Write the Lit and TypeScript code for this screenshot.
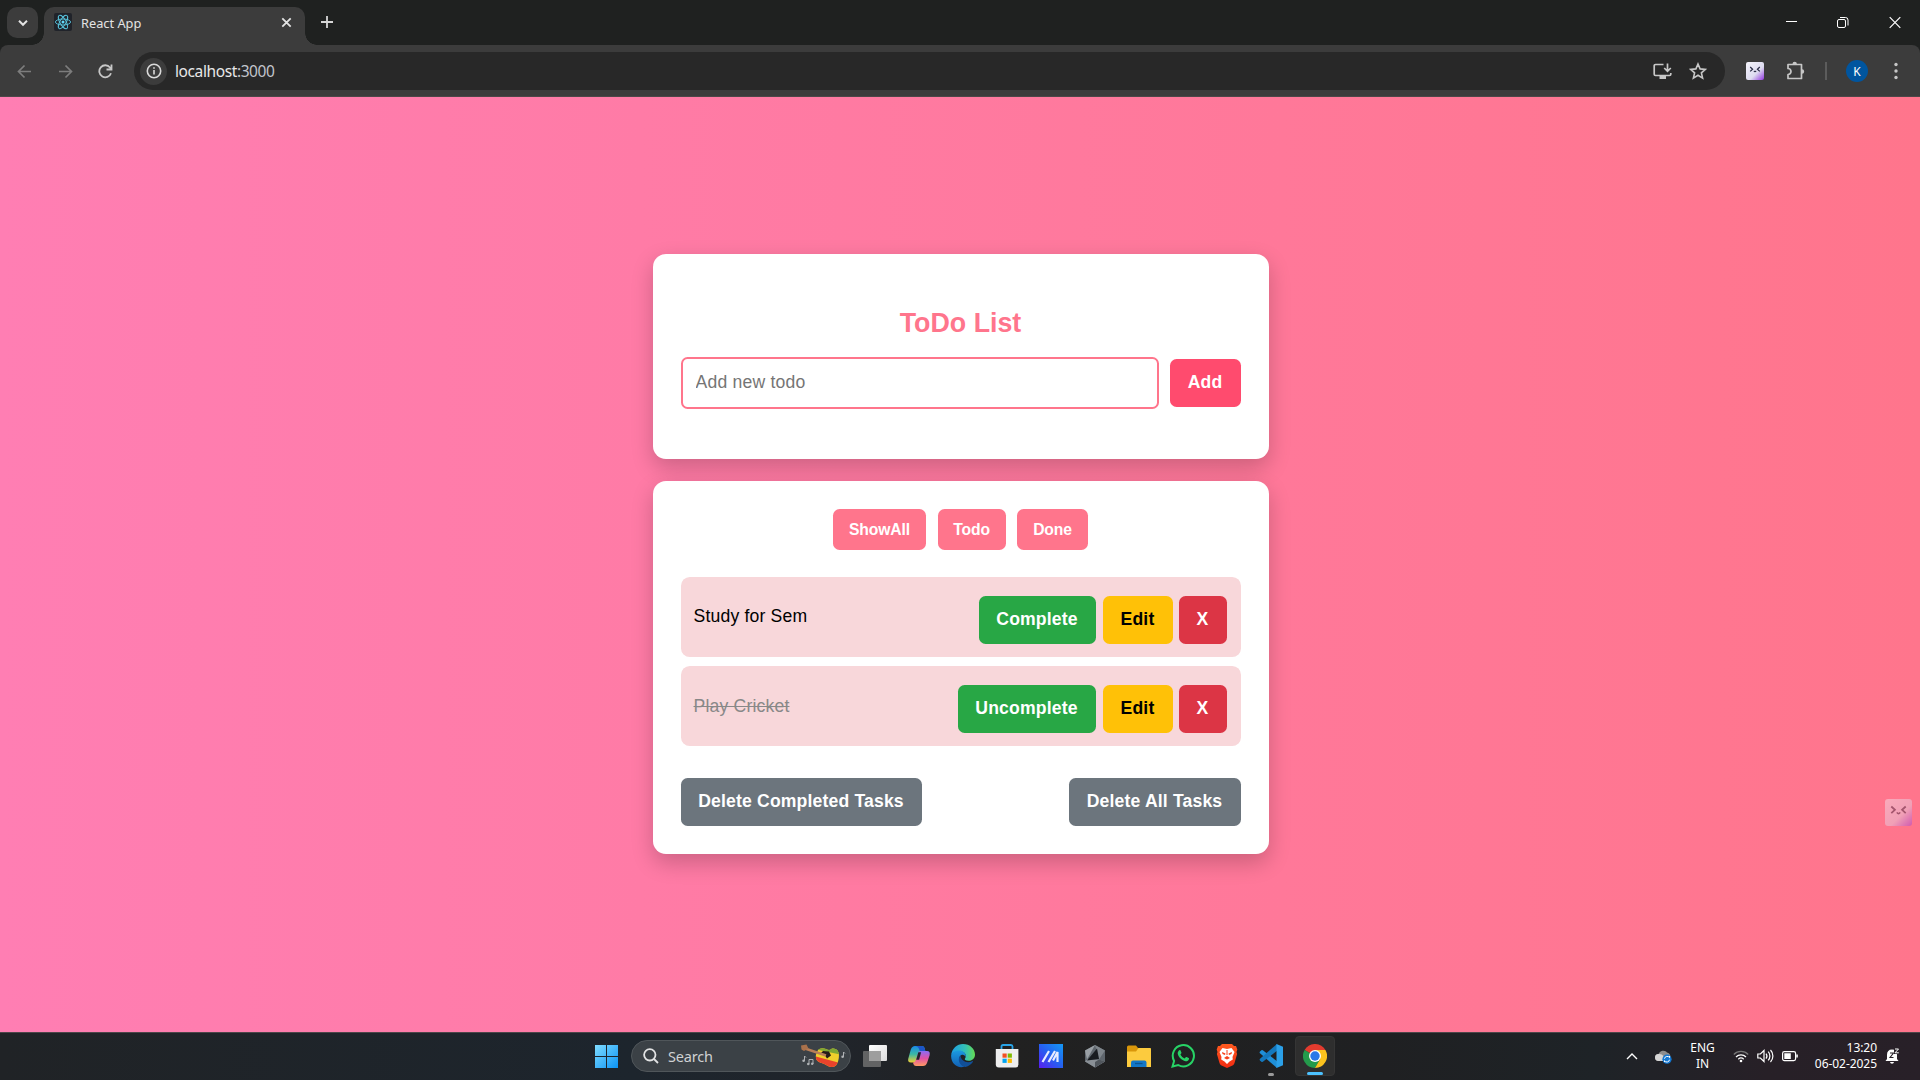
import { LitElement, html, css } from "lit";
import { customElement } from "lit/decorators.js";

const reactLogo = html`<svg width="18" height="18" viewBox="0 0 18 18"><rect width="18" height="18" rx="2" fill="#20232a"/><g fill="none" stroke="#58c4dc" stroke-width=".9"><ellipse cx="9" cy="9" rx="7.6" ry="3"/><ellipse cx="9" cy="9" rx="7.6" ry="3" transform="rotate(60 9 9)"/><ellipse cx="9" cy="9" rx="7.6" ry="3" transform="rotate(120 9 9)"/></g><circle cx="9" cy="9" r="1.5" fill="#61dafb"/></svg>`;

const face = html`<svg width="18" height="18" viewBox="0 0 18 18"><defs><linearGradient id="f" x1="0" y1="0" x2="1" y2="1"><stop offset="0" stop-color="#f4f3fa"/><stop offset=".6" stop-color="#dedcf0"/><stop offset="1" stop-color="#9236e0"/></linearGradient></defs><rect width="18" height="18" rx="2" fill="url(#f)"/><path d="M4.200 5l2.400 2.200-2.400 2.200M13.800 5l-2.400 2.200 2.400 2.200" fill="none" stroke="#292b45" stroke-width="1.200"/><path d="M7.900 8.900q1.100 1.700 2.200 0" fill="none" stroke="#292b45" stroke-width="1.100"/></svg>`;

const taskIcons = [
  // task view
  html`<svg width="26" height="24" viewBox="0 0 26 24"><defs><linearGradient id="a" x2="1" y2="1"><stop stop-color="#fff"/><stop offset="1" stop-color="#dcdcdc"/></linearGradient></defs><rect x="7" y="1" width="18" height="16" rx="1" fill="url(#a)"/><rect x="1" y="7" width="18" height="16" rx="1" fill="#6f6f6f" fill-opacity=".85"/><path d="M7 7h12v10H7z" fill="#9e9e9e"/></svg>`,
  // copilot
  html`<svg width="24" height="24" viewBox="0 0 24 24"><defs><linearGradient id="b" x1="0" y1="0" x2="0" y2="1"><stop stop-color="#1a8be8"/><stop offset=".5" stop-color="#3ab9a5"/><stop offset="1" stop-color="#f2cf31"/></linearGradient><linearGradient id="c" x1="0" y1="0" x2="0" y2="1"><stop stop-color="#8a6cf5"/><stop offset=".5" stop-color="#e052a4"/><stop offset="1" stop-color="#ff9a62"/></linearGradient></defs><path d="M8 2h7q2 0 2.600 2l.7 3h-3q-2 0-2.600 2l-2 7q-.7 2.500-3 2.500H4Q.3 18.500 1.300 14.600L3.800 5.500Q5 2 8 2z" fill="url(#b)"/><path d="M8 2h7q2 0 2.600 2l.7 3h-3q-1.300 0-2 .9L11.600 4Q10.700 2 8 2z" fill="#1c55c8"/><path d="M16 22H9q-2 0-2.600-2l-.4-1.600q2 .2 3-2.400l2-7q.6-2 2.600-2H20q3.500 0 2.600 4.200L20.200 18.500Q19 22 16 22z" fill="url(#c)"/><path d="M11.300 8.200h2.800l-2 7.500H9.200z" fill="#20242a"/></svg>`,
  // edge
  html`<svg width="24" height="24" viewBox="0 0 24 24"><defs><linearGradient id="d" x1="0" y1=".3" x2="1" y2=".3"><stop stop-color="#1c9ee6"/><stop offset=".6" stop-color="#35c1b4"/><stop offset="1" stop-color="#65dc52"/></linearGradient><linearGradient id="e" x2="0" y2="1"><stop stop-color="#1b9be0"/><stop offset="1" stop-color="#1260b4"/></linearGradient></defs><path d="M.2 11C1 4.500 6 0 12 0c7 0 12 5 12 10.500 0 4-3 6.300-6.500 6.300-3 0-4.300-1.300-3.500-2.300 2.400-3.500-.5-7-4.500-7C5 7.500 1.200 8.500.2 11z" fill="url(#d)"/><path d="M.2 11C1.300 7.500 5.500 6 9 6.500c3.800.5 6.400 3.500 5.700 6.500-.5-1.500-2-2.600-3.700-2.300-4.200 1-3.500 9 2.500 12C6 25-.6 19 .2 11z" fill="url(#e)"/><path d="M9.500 11.500c-3.500 3-1.500 10.500 5 11.600 3-.8 6-2.700 7.500-5.300.3-.7-.2-.9-.8-.6-5.500 2.500-11.200-.2-11.700-5.700z" fill="#114f98"/></svg>`,
  // store
  html`<svg width="24" height="24" viewBox="0 0 24 24"><path d="M6.500 5V2.600Q6.500 1 8 1h8q1.500 0 1.500 1.600V5" fill="none" stroke="#29a4e8" stroke-width="1.800"/><path d="M.8 5h22.600v15.500q0 3-3 3H3.800q-3 0-3-3z" fill="#eeeeee"/><path d="M7.500 9.500h4.200v4.200H7.500z" fill="#f25022"/><path d="M12.700 9.500h4.200v4.200h-4.200z" fill="#7fba00"/><path d="M7.500 14.700h4.200v4.200H7.500z" fill="#00a4ef"/><path d="M12.700 14.700h4.200v4.200h-4.200z" fill="#ffb900"/></svg>`,
  // slanted lines tile
  html`<svg width="24" height="24" viewBox="0 0 24 24"><defs><linearGradient id="g" x1="1" y1="0" x2="0" y2="1"><stop stop-color="#1499f5"/><stop offset=".5" stop-color="#2560f0"/><stop offset="1" stop-color="#5a1df0"/></linearGradient></defs><path d="M0 0h24v24H0z" fill="url(#g)"/><path d="M3.500 18L10 7M9.500 18L16 7M14 16.500l4.500-8.500v10" fill="none" stroke="#e8ecff" stroke-width="2.200"/></svg>`,
  // hexagon
  html`<svg width="24" height="24" viewBox="0 0 24 24"><path d="M12 1l10 5.500v11L12 23.500 2 17.500v-11z" fill="#5f666d"/><path d="M12 1l10 5.500-6 9z" fill="#7f868c"/><path d="M12 1L2 6.500l2 9z" fill="#9aa0a5"/><path d="M2 17.500L12 23.500l10-6-6-2H4z" fill="#8a9096"/><path d="M12 18v5.500l10-6-6-2z" fill="#50565c"/><path d="M14 4.500L4 16.500l12-1.500z" fill="#191c20"/></svg>`,
  // folder
  html`<svg width="26" height="24" viewBox="0 0 26 24"><path d="M1 3q0-1.500 1.500-1.500h7.500l2 2.500h11q2 0 2 2v6H1z" fill="#d9960a"/><path d="M1 7.500h9L12.500 4H24q1 0 1 1v18H1z" fill="#fccb3e"/><path d="M5 23v-4.500q0-2 2-2h11.500q2 0 2 2V23z" fill="#1277c8"/><path d="M9 19.500h7.500" stroke="#0b5592" stroke-width="1.300"/></svg>`,
  // whatsapp
  html`<svg width="24" height="24" viewBox="0 0 24 24"><path d="M1.500 22.500l1.600-5.600A10.600 10.600 0 1 1 7.200 21z" fill="none" stroke="#27d366" stroke-width="2"/><path d="M8.300 6.300c.4-.4 1-.3 1.200.2l.9 2q.2.500-.2.900l-.8 1c1 1.900 2.400 3.200 4.300 4l1-1.200q.4-.5.900-.2l2 1q.6.300.4.900c-.4 1.800-2.100 2.500-3.500 2.300-4-.8-7.300-4-7.800-7.600-.1-1.400.7-2.600 1.600-3.300z" fill="#27d366"/></svg>`,
  // brave
  html`<svg width="24" height="24" viewBox="0 0 24 24"><defs><linearGradient id="h" x2="0" y2="1"><stop stop-color="#ff5a1f"/><stop offset="1" stop-color="#f02b12"/></linearGradient></defs><path d="M7 0h10l2 2h2l1.300 3.500L21.500 8l.6 2-2.600 9q-.4 1.500-1.500 2.200L12 24l-6-2.800Q4.900 20.500 4.500 19L1.900 10l.6-2-.8-2.500L3 2h2z" fill="url(#h)"/><path d="M7.500 4L12 5l4.500-1 3 4-2 5 .3 2.500-3.300 2L12 20l-2.500-2.500-3.300-2 .3-2.500-2-5z" fill="#fff"/><path d="M7 8l3.500 1.500L10 11l-2.500-1zm10 0l-3.500 1.500.5 1.500 2.500-1zM9 14l3-2 3 2-3 1.500zM11.500 6h1v5h-1z" fill="#f6401a"/></svg>`,
  // vscode
  html`<svg width="24" height="24" viewBox="0 0 24 24"><path d="M1 9.200q-.8-.8 0-1.600l1.400-1.300q.7-.5 1.400 0L18 17.200V24z" fill="#1f8fd8"/><path d="M1 14.800q-.8.800 0 1.600l1.400 1.300q.7.500 1.400 0L18 6.800V0z" fill="#1478bd"/><path d="M17.500 0L24 2.800v18.400L17.500 24z" fill="#2ba0e8"/></svg>`,
  // chrome
  html`<svg width="24" height="24" viewBox="0 0 24 24"><path d="M12 12L1.600 6A12 12 0 0 1 22.400 6z" fill="#e33b2e"/><path d="M12 12l5.200 3L12 24A12 12 0 0 1 1.600 6z" fill="#249a4b"/><path d="M12 6h10.400A12 12 0 0 1 12 24l5.200-9z" fill="#fcc31e"/><circle cx="12" cy="12" r="6" fill="#fff"/><circle cx="12" cy="12" r="4.700" fill="#2a78e8"/></svg>`,
];

@customElement("browser-bar")
class BrowserBar extends LitElement {
  static styles = css`
    :host { display: block; height: 97px; flex: none; font-family: "Noto Sans", sans-serif; background: #1f2120; color: #e3e3e3; }
    * { box-sizing: border-box; }
    svg { display: block; flex: none; }
    .tabs { height: 45px; display: flex; background: #1f2120; }
    .search-tabs { width: 31px; height: 31px; margin: 7px 6px 0 7px; border-radius: 10px; background: #3c3c3c; display: grid; place-items: center; }
    .tab { position: relative; width: 261px; height: 38px; margin-top: 7px; border-radius: 10px 10px 0 0; background: #3c3c3c; display: flex; padding: 6px 13px 0 10px; }
    .tab::before, .tab::after { content: ""; position: absolute; bottom: 0; width: 12px; height: 12px; }
    .tab::before { left: -12px; background: radial-gradient(circle at 0 0, transparent 11.5px, #3c3c3c 12px); }
    .tab::after { right: -12px; background: radial-gradient(circle at 100% 0, transparent 11.5px, #3c3c3c 12px); }
    .tab-title { margin-left: 9px; flex: 1; line-height: 20px; font-size: 12.800px; }
    .tab-close { margin-top: 4px; }
    .plus { margin: 16px 0 0 16px; }
    .window { margin-left: auto; display: flex; gap: 40px; padding: 16px 19px 0 0; }
    .tools { height: 52px; display: flex; align-items: center; padding: 1px 18px 0 17px; border-bottom: 1px solid #4d4748; border-radius: 8px 8px 0 0; background: #3c3c3c; }
    .nav { display: flex; gap: 25.500px; margin-right: 21px; }
    .address { width: 1591px; height: 38px; border-radius: 19px; background: #282828; display: flex; align-items: center; padding: 0 18px 0 6px; }
    .info { width: 27px; height: 27px; border-radius: 50%; background: #3c3c3c; display: grid; place-items: center; margin-right: 8px; }
    .url { flex: 1; font-size: 15.5px; letter-spacing: -0.400px; color: #e8e8e8; }
    .port { color: #c2c5cc; }
    .star { margin-left: 17px; }
    .face { margin-left: 21px; }
    .puzzle { margin-left: 22px; }
    .divider { width: 2px; height: 18px; background: #5c5c5c; margin: 0 19px 0 19px; }
    .avatar { width: 22px; height: 22px; border-radius: 50%; background: #00559f; display: grid; place-items: center; font-size: 12px; color: #fff; }
    .dots { margin-left: 26px; }
  `;
  render() {
    return html`
      <div class="tabs">
        <div class="search-tabs"><svg width="12" height="12" viewBox="0 0 12 12" fill="none" stroke="#e3e3e3" stroke-width="2"><path d="M2 3.800l4 4 4-4"/></svg></div>
        <div class="tab">${reactLogo}<span class="tab-title">React App</span><svg class="tab-close" width="11" height="11" viewBox="0 0 11 11" stroke="#e3e3e3" stroke-width="1.800"><path d="M1.300 1.300l8.400 8.400M9.700 1.300L1.300 9.700"/></svg></div>
        <svg class="plus" width="12" height="12" viewBox="0 0 12 12" stroke="#d6d6d6" stroke-width="1.800"><path d="M6 0v12M0 6h12"/></svg>
        <div class="window">
          <svg width="11" height="13" viewBox="0 0 11 13" stroke="#fff"><path d="M0 5.500h11"/></svg>
          <svg width="12" height="13" viewBox="0 0 12 13" fill="none" stroke="#fff"><rect x=".5" y="3.500" width="8" height="8" rx="1.500"/><path d="M3 1.500h5.500q2.500 0 2.500 2.500v5.500"/></svg>
          <svg width="12" height="13" viewBox="0 0 12 13" stroke="#fff" stroke-width="1.200"><path d="M.7 1.200l10.600 10.600M11.300 1.200L.7 11.800"/></svg>
        </div>
      </div>
      <div class="tools">
        <div class="nav">
          <svg width="15" height="15" viewBox="0 0 15 15" fill="none" stroke="#7d7d7d" stroke-width="1.700"><path d="M14 7.500H2M7.500 1.500l-6 6 6 6"/></svg>
          <svg width="15" height="15" viewBox="0 0 15 15" fill="none" stroke="#7d7d7d" stroke-width="1.700"><path d="M1 7.500h12M7.500 1.500l6 6-6 6"/></svg>
          <svg width="15" height="15" viewBox="0 0 15 15" fill="none" stroke="#c7c7c7" stroke-width="1.800"><path d="M13 9.200A6 6 0 1 1 12 3.500l1.200 1.500M13.500.5v5H8.500"/></svg>
        </div>
        <div class="address">
          <div class="info"><svg width="16" height="16" viewBox="0 0 16 16" fill="none" stroke="#dadada" stroke-width="1.600"><circle cx="8" cy="8" r="6.700"/><path d="M8 7v4.500M8 4.300v1.500"/></svg></div>
          <span class="url">localhost<span class="port">:3000</span></span>
          <svg width="19" height="17" viewBox="0 0 19 17" fill="none" stroke="#c7c7c7" stroke-width="1.700"><path d="M10.500 1.500H2.500Q1.200 1.500 1.200 2.800v8.400q0 1.300 1.300 1.300h14q1.300 0 1.300-1.300V10M14.500.5v7M11.200 5l3.300 3.300L17.800 5"/><path d="M6.500 14.500h6.500" stroke-width="3"/></svg>
          <svg class="star" width="18" height="18" viewBox="0 0 18 18" fill="none" stroke="#c7c7c7" stroke-width="1.600"><path d="M9 2l2.100 4.900 5.200.5-3.900 3.500 1.200 5.200L9 13.300l-4.600 2.800 1.200-5.200-3.900-3.500 5.200-.5z"/></svg>
        </div>
        <div class="face">${face}</div>
        <svg class="puzzle" width="20" height="20" viewBox="0 0 20 20" fill="none" stroke="#c7c7c7" stroke-width="1.700"><path d="M2 3.500H15.500V17.500H2V13.500a3 3 0 0 0 0-6z" stroke-linejoin="round"/><path d="M6.500 3a2.200 2.200 0 0 1 4.400 0zM16 8.300a2.200 2.200 0 0 1 0 4.400z" fill="#c7c7c7" stroke="none"/></svg>
        <div class="divider"></div>
        <div class="avatar">K</div>
        <svg class="dots" width="4" height="18" viewBox="0 0 4 18" fill="#c7c7c7"><circle cx="2" cy="2.500" r="1.700"/><circle cx="2" cy="9" r="1.700"/><circle cx="2" cy="15.500" r="1.700"/></svg>
      </div>`;
  }
}

@customElement("todo-page")
class TodoPage extends LitElement {
  static styles = css`
    :host { position: relative; flex: 1; display: flex; flex-direction: column; align-items: center; padding: 157px 0 0 1px; box-sizing: border-box; gap: 22px; background: linear-gradient(to right, #ff7eb3, #ff758c); font-family: "Liberation Sans", Arial, sans-serif; font-size: 17.6px; }
    * { box-sizing: border-box; }
    .card { width: 616px; border-radius: 13px; background: #fff; padding: 28px; box-shadow: 0 8.800px 22px rgba(0, 0, 0, 0.2); }
    .entry { height: 205px; padding-top: 54px; }
    h2 { margin: 0 0 19px; font-size: 26.800px; line-height: 30px; text-align: center; color: #ff758c; }
    .form { display: flex; align-items: center; justify-content: space-between; }
    input { width: 478px; height: 52px; border: 2px solid #ff758c; border-radius: 6.600px; padding: 0 13px 2px; font: inherit; letter-spacing: 0.200px; outline: none; }
    input::placeholder { color: #757575; }
    button { height: 48px; border: 0; border-radius: 6.600px; padding: 0 0 2px; font: bold 17.6px "Liberation Sans", Arial, sans-serif; letter-spacing: 0.160px; color: #fff; white-space: nowrap; }
    .add { width: 71px; background: #ff4b6e; }
    .list { height: 373px; }
    .filters { display: flex; justify-content: center; gap: 11.500px; margin-bottom: 27px; }
    .filters button { height: 41px; background: #ff758c; font-size: 15.700px; letter-spacing: -0.120px; padding: 0; width: 71px; }
    .filters .all { width: 93px; }
    .filters .todo { width: 68px; }
    .task { height: 80px; margin-bottom: 9px; border-radius: 8.800px; background: #f8d7da; display: flex; align-items: flex-start; padding: 19px 14px 0 13px; gap: 6px; }
    .task span { flex: 1; padding-top: 10px; line-height: 20px; color: #000; letter-spacing: 0.180px; }
    .task span.done { color: #888; text-decoration: line-through; padding-top: 11px; }
    .complete { background: #28a745; width: 117px; margin-right: 1px; }
    .complete.undo { width: 138px; }
    .task .edit { width: 70px; background: #ffc107; color: #000; }
    .task .remove { width: 48px; background: #dc3545; }
    .foot { display: flex; justify-content: space-between; margin-top: 32px; }
    .foot button { background: #6c757d; width: 172px; }
    .foot .wide { width: 241px; }
    .helper { position: absolute; right: 8px; top: 702px; width: 27px; height: 27px; opacity: .42; }
    .helper svg { width: 27px; height: 27px; }
  `;
  tasks = [
    { text: "Study for Sem", done: false },
    { text: "Play Cricket", done: true },
  ];
  render() {
    return html`
      <div class="card entry">
        <h2>ToDo List</h2>
        <div class="form"><input placeholder="Add new todo" /><button class="add">Add</button></div>
      </div>
      <div class="card list">
        <div class="filters"><button class="all">ShowAll</button><button class="todo">Todo</button><button>Done</button></div>
        ${this.tasks.map((t) => html`<div class="task">
          <span class=${t.done ? "done" : ""}>${t.text}</span>
          <button class="complete ${t.done ? "undo" : ""}">${t.done ? "Uncomplete" : "Complete"}</button>
          <button class="edit">Edit</button><button class="remove">X</button>
        </div>`)}
        <div class="foot"><button class="wide">Delete Completed Tasks</button><button>Delete All Tasks</button></div>
      </div>
      <div class="helper">${face}</div>`;
  }
}

@customElement("task-bar")
class TaskBar extends LitElement {
  static styles = css`
    :host { display: flex; height: 48px; flex: none; box-sizing: border-box; border-top: 1px solid #4d4649; padding-bottom: 1px; background: linear-gradient(90deg, #202326 0, #1d252d 33%, #20242a 44%, #212121 52%, #1f2022 72%, #1e2327 83%, #272027 92%, #282028 100%); color: #fff; font-family: "Noto Sans", sans-serif; font-size: 12px; }
    * { box-sizing: border-box; }
    svg { display: block; flex: none; }
    .apps { display: flex; align-items: center; padding-left: 595px; }
    .search { width: 220px; height: 32px; margin: 0 2px 0 13px; border-radius: 16px; background: #3b4146; border: 1px solid #50565a; display: flex; align-items: center; padding: 0 4px 0 11px; font-size: 14.500px; letter-spacing: -0.200px; color: #cfd1d3; }
    .search span { margin-left: 9px; flex: 1; }
    .app { position: relative; width: 40px; height: 40px; margin: 0 2px; border-radius: 4px; display: grid; place-items: center; }
    .app.active { background: #2e2e2e; border: 1px solid #353535; }
    .app::after { content: ""; position: absolute; bottom: 0; height: 3px; border-radius: 2px; }
    .app.running::after { width: 6px; background: #9a9a9a; }
    .app.active::after { width: 16px; background: #4cc2ff; }
    .tray { margin-left: auto; display: flex; align-items: center; padding-right: 20px; }
    .cloud { margin-left: 17px; }
    .lang { text-align: center; line-height: 16px; margin: 0 18px 0 18px; }
    .status { display: flex; gap: 8px; align-items: center; }
    .clock { text-align: right; line-height: 16px; margin: 0 8px 0 17px; letter-spacing: -0.050px; }
  `;
  render() {
    return html`
      <div class="apps">
        <svg width="23" height="23" viewBox="0 0 23 23"><defs><linearGradient id="w" x2="1" y2="1"><stop stop-color="#7fdcff"/><stop offset="1" stop-color="#0b93f5"/></linearGradient></defs><path d="M0 0h11v11H0zM12 0h11v11H12zM0 12h11v11H0zM12 12h11v11H12z" fill="url(#w)"/></svg>
        <div class="search">
          <svg width="16" height="16" viewBox="0 0 16 16" fill="none" stroke="#e2e3e4" stroke-width="1.800"><circle cx="6.800" cy="6.800" r="5.700"/><path d="M11 11l4 4"/></svg>
          <span>Search</span>
          <svg width="46" height="24" viewBox="0 0 46 24">
            <defs><clipPath id="body"><path d="M18 6q3-3 8-1 4 2 6-.5 6-1 7 6 0 7-3 11-4 3-9 0-3-2-7-3-5-2-4-8z"/></clipPath></defs>
            <g clip-path="url(#body)"><path d="M10 0h32v24H10z" fill="#f0cf2c"/><path d="M14 0h28v11L14 5z" fill="#7fa733"/><path d="M14 12l26 7v5H14z" fill="#e8432c"/></g>
            <path d="M20 10l3-3 6 .500 2 4-4 3-2-3z" fill="#241c18"/>
            <path d="M5 4.500l21 7" stroke="#b87f58" stroke-width="2.400"/>
            <path d="M1 1.500L6.500.500l2 4L4 7 1.500 5.500z" fill="#a9714b"/>
            <g fill="none" stroke="#aeb1b4"><path d="M4.500 17v-5l1.500 1.500M9 20.500v-5h4v4.500M43.500 13V8l1.500 1.500"/></g><g fill="#aeb1b4"><circle cx="3.600" cy="16.700" r="1.300"/><circle cx="8.200" cy="20" r="1.200"/><circle cx="12.200" cy="19.700" r="1.200"/><circle cx="42.600" cy="12.700" r="1.300"/></g>
          </svg>
        </div>
        ${taskIcons.map((icon, i) => html`<div class="app ${i === 10 ? "active" : i === 9 ? "running" : ""}">${icon}</div>`)}
      </div>
      <div class="tray">
        <svg width="12" height="8" viewBox="0 0 12 8" fill="none" stroke="#fff" stroke-width="1.400"><path d="M1 7l5-5 5 5"/></svg>
        <svg class="cloud" width="17" height="15" viewBox="0 0 17 15"><path d="M3.500 12A3.400 3.400 0 0 1 3.500 5 5 5 0 0 1 12 3.500q3 .7 3.500 4V12z" fill="#8d8d8d"/><path d="M3.500 12A3.400 3.400 0 0 1 3.500 5q3-.5 5 2v5z" fill="#d6d6d6"/><circle cx="12" cy="10.200" r="4.600" fill="#1278d4"/><path d="M9.500 9.700a2.700 2.700 0 0 1 5-1V7M14.500 10.700a2.700 2.700 0 0 1-5 1V13" fill="none" stroke="#fff"/></svg>
        <div class="lang">ENG<br />IN</div>
        <div class="status">
          <svg width="16" height="14" viewBox="0 0 16 14" fill="none" stroke="#fff" stroke-width="1.200"><path d="M.8 5.500a10 10 0 0 1 14.400 0" stroke="#777"/><path d="M3 8a7 7 0 0 1 10 0M5.300 10.200a4 4 0 0 1 5.400 0"/><circle cx="8" cy="12" r="1.300" fill="#fff" stroke="none"/></svg>
          <svg width="17" height="14" viewBox="0 0 17 14" fill="none" stroke="#fff" stroke-width="1.200"><path d="M.8 5h2.600L7 1.500v11L3.400 9H.8zM9 4.500a4 4 0 0 1 0 5M11.200 2.700a6.300 6.300 0 0 1 0 8.600M13.500 1a8.700 8.700 0 0 1 0 12"/></svg>
          <svg width="16" height="12" viewBox="0 0 16 12"><rect x=".6" y="1.600" width="13" height="9" rx="1.800" fill="none" stroke="#fff" stroke-width="1.200"/><path d="M2.300 3.300h6.500v5.600H2.300zM14.300 4.500h1.500v3h-1.500z" fill="#fff"/></svg>
        </div>
        <div class="clock">13:20<br />06-02-2025</div>
        <svg width="15" height="16" viewBox="0 0 15 16"><path d="M2 7q0-5.500 5-5.500Q12 1.500 12 7v4l1.500 2H.5L2 11zM5 14h4q-.3 1.700-2 1.700T5 14z" fill="#fff"/><path d="M5 5h3.500L5 9.500h3.500" fill="none" stroke="#272027" stroke-width="1.100"/><path d="M9 0h6v6H9z" fill="#272027"/><path d="M10 1h3.500L10 4.800h3.800" fill="none" stroke="#fff"/></svg>
      </div>`;
  }
}

@customElement("app-root")
class AppRoot extends LitElement {
  static styles = css`
    :host { display: flex; flex-direction: column; width: 1920px; height: 1080px; overflow: hidden; }
  `;
  render() {
    return html`<browser-bar></browser-bar><todo-page></todo-page><task-bar></task-bar>`;
  }
}
